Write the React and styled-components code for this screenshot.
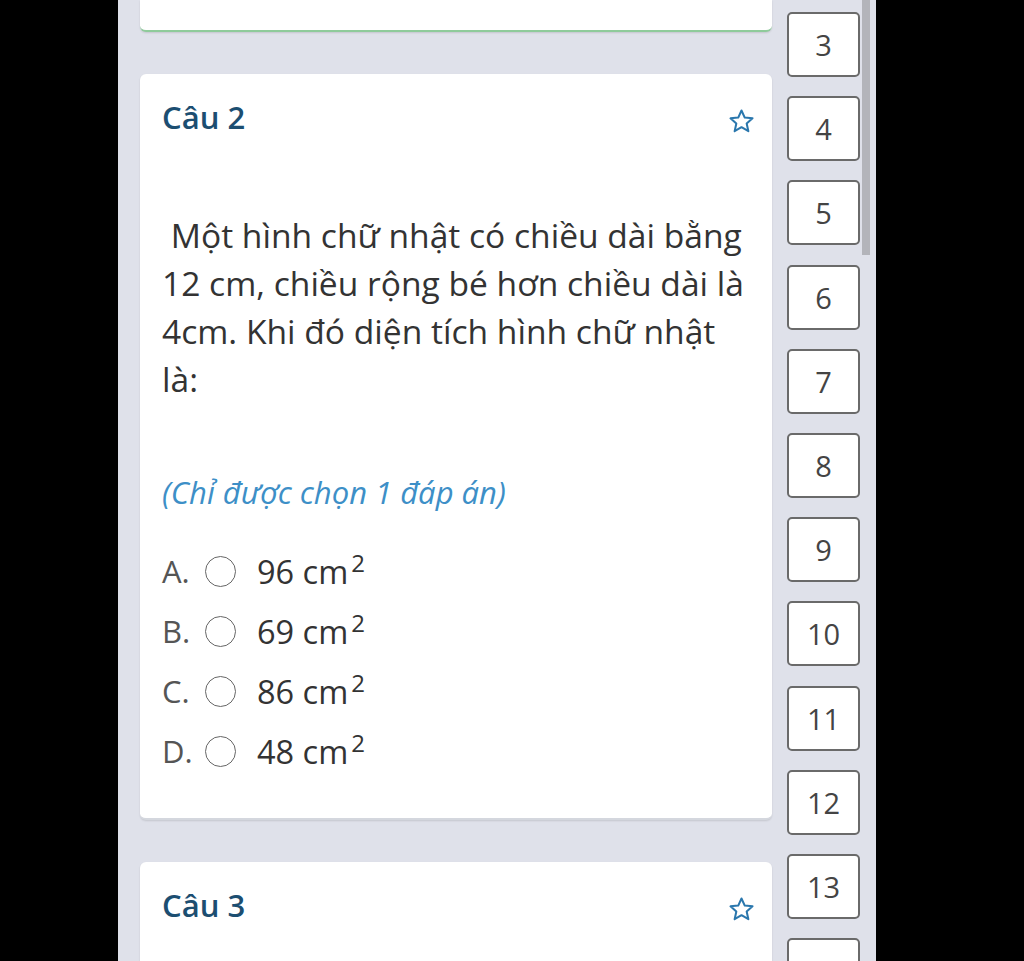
import styled, { createGlobalStyle } from "styled-components";

const GlobalStyle = createGlobalStyle`
  html, body {
    margin: 0;
    padding: 0;
    background: #000;
  }
  body {
    font-family: "Open Sans", "Noto Sans", Arial, sans-serif;
  }
`;

const Page = styled.div`
  width: 1024px;
  height: 961px;
  padding-left: 118px;
  box-sizing: border-box;
  background: #000;
  overflow: hidden;
`;

const Panel = styled.div`
  width: 758px;
  height: 961px;
  background: #dfe1ea;
  display: flex;
  overflow: hidden;
`;

const Main = styled.div`
  width: 632px;
  margin-left: 22px;
  display: flex;
  flex-direction: column;
  gap: 42px;
  flex-shrink: 0;
`;

const Card = styled.div`
  background: #fff;
  border-radius: 6px;
  box-shadow: 0 1px 2px rgba(0, 0, 0, 0.12);
  border-bottom: 2px solid ${(p) => (p.done ? "#8fcb9b" : "#d4d7de")};
  box-sizing: border-box;
  flex-shrink: 0;
`;

const TopCard = styled(Card)`
  height: 32px;
  border-top-left-radius: 0;
  border-top-right-radius: 0;
`;

const QuestionCard = styled(Card)`
  padding: 25px 17px 37px 22px;
  min-height: ${(p) => (p.$tall ? "300px" : "0")};
`;

const Header = styled.div`
  display: flex;
  justify-content: space-between;
  align-items: center;
`;

const Title = styled.div`
  font-size: 31px;
  line-height: 36px;
  font-weight: 600;
  color: #1c4e71;
`;

const StarBtn = styled.div`
  width: 28px;
  height: 28px;
  margin-top: 8px;
  display: flex;
  align-items: center;
  justify-content: center;
`;

const Question = styled.p`
  margin: 76px 0 0;
  width: 590px;
  font-size: 33.6px;
  line-height: 48px;
  color: #333;
  white-space: pre-wrap;
`;

const Hint = styled.p`
  margin: 69px 0 0;
  font-size: 31px;
  line-height: 40px;
  font-style: italic;
  color: #3d8fc7;
`;

const Options = styled.div`
  margin-top: 29px;
  display: flex;
  flex-direction: column;
`;

const Option = styled.label`
  display: flex;
  align-items: center;
  height: 60px;
`;

const Letter = styled.span`
  font-size: 31px;
  color: #555;
  width: 43px;
`;

const Radio = styled.span`
  width: 31px;
  height: 31px;
  border: 1.5px solid #666;
  border-radius: 50%;
  box-sizing: border-box;
  margin-right: 21px;
  flex-shrink: 0;
`;

const Answer = styled.span`
  font-size: 32.5px;
  color: #333;
  sup {
    font-size: 24px;
    line-height: 0;
    vertical-align: super;
    margin-left: 3px;
  }
`;

const Side = styled.div`
  width: 73px;
  margin-left: 15px;
  padding-top: 12px;
  display: flex;
  flex-direction: column;
  gap: 19.2px;
  flex-shrink: 0;
`;

const NumBox = styled.div`
  height: 65px;
  box-sizing: border-box;
  border: 2px solid #6a6a6a;
  border-radius: 5px;
  background: #fff;
  display: flex;
  align-items: center;
  justify-content: center;
  font-size: 29px;
  color: #444;
  flex-shrink: 0;
`;

const Track = styled.div`
  width: 8px;
  margin-left: 2px;
  flex-shrink: 0;
`;

const Thumb = styled.div`
  height: 255px;
  background: #b3b4ba;
`;

const Star = () => (
  <svg width="27" height="27" viewBox="0 0 24 24">
    <path
      d="M12 2.2l2.9 6.3 6.9.7-5.2 4.6 1.5 6.8L12 17.1l-6.1 3.5 1.5-6.8-5.2-4.6 6.9-.7z"
      fill="none"
      stroke="#2a77ad"
      strokeWidth="1.8"
      strokeLinejoin="round"
    />
  </svg>
);

const options = [
  ["A.", "96"],
  ["B.", "69"],
  ["C.", "86"],
  ["D.", "48"],
];

const numbers = [3, 4, 5, 6, 7, 8, 9, 10, 11, 12, 13, 14];

export default function App() {
  return (
    <Page>
      <GlobalStyle />
      <Panel>
        <Main>
          <TopCard done />
          <QuestionCard>
            <Header>
              <Title>Câu 2</Title>
              <StarBtn>
                <Star />
              </StarBtn>
            </Header>
            <Question>
              {" Một hình chữ nhật có chiều dài bằng 12 cm, chiều rộng bé hơn chiều dài là 4cm. Khi đó diện tích hình chữ nhật là:"}
            </Question>
            <Hint>(Chỉ được chọn 1 đáp án)</Hint>
            <Options>
              {options.map(([l, v]) => (
                <Option key={l}>
                  <Letter>{l}</Letter>
                  <Radio />
                  <Answer>
                    {v} cm<sup>2</sup>
                  </Answer>
                </Option>
              ))}
            </Options>
          </QuestionCard>
          <QuestionCard $tall>
            <Header>
              <Title>Câu 3</Title>
              <StarBtn>
                <Star />
              </StarBtn>
            </Header>
          </QuestionCard>
        </Main>
        <Side>
          {numbers.map((n) => (
            <NumBox key={n}>{n}</NumBox>
          ))}
        </Side>
        <Track>
          <Thumb />
        </Track>
      </Panel>
    </Page>
  );
}
